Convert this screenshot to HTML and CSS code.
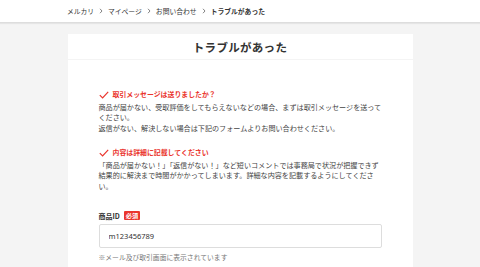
FILE: index.html
```html
<!DOCTYPE html>
<html lang="ja">
<head>
    <meta charset="UTF-8">
    <title>トラブルがあった</title>
    <link rel="stylesheet" href="styles.css">
</head>
<body>
<header class="header">
    <ul class="crumbs">
        <li>メルカリ</li>
        <li class="sep"><svg width="4" height="6" viewBox="0 0 4 6"><path d="M1 0.8L3 3L1 5.2" fill="none" stroke="#666" stroke-width="0.8"/></svg></li>
        <li>マイページ</li>
        <li class="sep"><svg width="4" height="6" viewBox="0 0 4 6"><path d="M1 0.8L3 3L1 5.2" fill="none" stroke="#666" stroke-width="0.8"/></svg></li>
        <li>お問い合わせ</li>
        <li class="sep"><svg width="4" height="6" viewBox="0 0 4 6"><path d="M1 0.8L3 3L1 5.2" fill="none" stroke="#666" stroke-width="0.8"/></svg></li>
        <li class="current">トラブルがあった</li>
    </ul>
</header>
<main class="main">
    <div class="title-box">
        <h1>トラブルがあった</h1>
    </div>
    <div class="content">
        <div class="notice">
            <h2><svg width="10" height="8" viewBox="0 0 10 8"><path d="M0.8 4.2L3.6 7L9.2 0.8" fill="none" stroke="#ea352d" stroke-width="1.2"/></svg>取引メッセージは送りましたか？</h2>
            <p>商品が届かない、受取評価をしてもらえないなどの場合、まずは取引メッセージを送ってください。<br>返信がない、解決しない場合は下記のフォームよりお問い合わせください。</p>
        </div>
        <div class="notice">
            <h2><svg width="10" height="8" viewBox="0 0 10 8"><path d="M0.8 4.2L3.6 7L9.2 0.8" fill="none" stroke="#ea352d" stroke-width="1.2"/></svg>内容は詳細に記載してください</h2>
            <p>「商品が届かない！」「返信がない！」など短いコメントでは事務局で状況が把握できず結果的に解決まで時間がかかってしまいます。詳細な内容を記載するようにしてください。</p>
        </div>
        <div class="field">
            <label class="label">商品ID<span class="req">必須</span></label>
            <input class="input" type="text" value="m123456789">
            <p class="note">※メール及び取引画面に表示されています</p>
        </div>
    </div>
</main>
</body>
</html>
```

FILE: styles.css
```css
*{
    margin: 0;
    padding: 0;
    box-sizing: border-box;
}
body{
    background: #f4f4f4;
    font-family: "Noto Sans CJK JP", "Noto Sans", sans-serif;
    color: #333333;
    height: 267px;
    overflow: hidden;
}
.header{
    height: 23px;
    background: #ffffff;
    border-bottom: 1px solid #dddddd;
    box-shadow: 0 1px 1px rgba(0,0,0,0.06);
}
.crumbs{
    display: flex;
    align-items: center;
    gap: 5px;
    width: 346px;
    margin: 0 auto;
    height: 22px;
    list-style: none;
    font-size: 6.8px;
    color: #333333;
}
.crumbs .sep{
    display: flex;
    align-items: center;
}
.crumbs .current{
    font-weight: bold;
}
.main{
    width: 345px;
    margin: 11px auto 0;
}
.title-box{
    background: #ffffff;
    height: 25px;
    display: flex;
    align-items: center;
    justify-content: center;
}
.title-box h1{
    font-size: 11.5px;
    font-weight: bold;
    color: #333333;
    letter-spacing: 0.3px;
}
.content{
    background: #ffffff;
    margin-top: 1px;
    padding: 29px 31px 0;
    height: 300px;
}
.notice{
    margin-bottom: 14px;
}
.notice h2{
    display: flex;
    align-items: center;
    gap: 4px;
    font-size: 6.9px;
    font-weight: bold;
    color: #ea352d;
    line-height: 11px;
    margin-bottom: 1.5px;
}
.notice p{
    font-size: 7.1px;
    line-height: 10.6px;
    color: #444444;
}
.field{
    margin-top: 19px;
}
.label{
    display: flex;
    align-items: center;
    gap: 4px;
    font-size: 7px;
    font-weight: bold;
    color: #333333;
    line-height: 10px;
}
.req{
    background: #ea352d;
    color: #ffffff;
    font-size: 6.2px;
    line-height: 9px;
    padding: 0 2px;
    border-radius: 1px;
}
.input{
    display: block;
    width: 100%;
    height: 24px;
    margin-top: 3px;
    border: 1px solid #dddddd;
    border-radius: 2px;
    padding: 0 9px;
    font-family: "Noto Sans", "Noto Sans CJK JP", sans-serif;
    font-size: 7.5px;
    color: #333333;
    background: #ffffff;
}
.note{
    margin-top: 4px;
    font-size: 6.8px;
    line-height: 10px;
    color: #777777;
}
```
